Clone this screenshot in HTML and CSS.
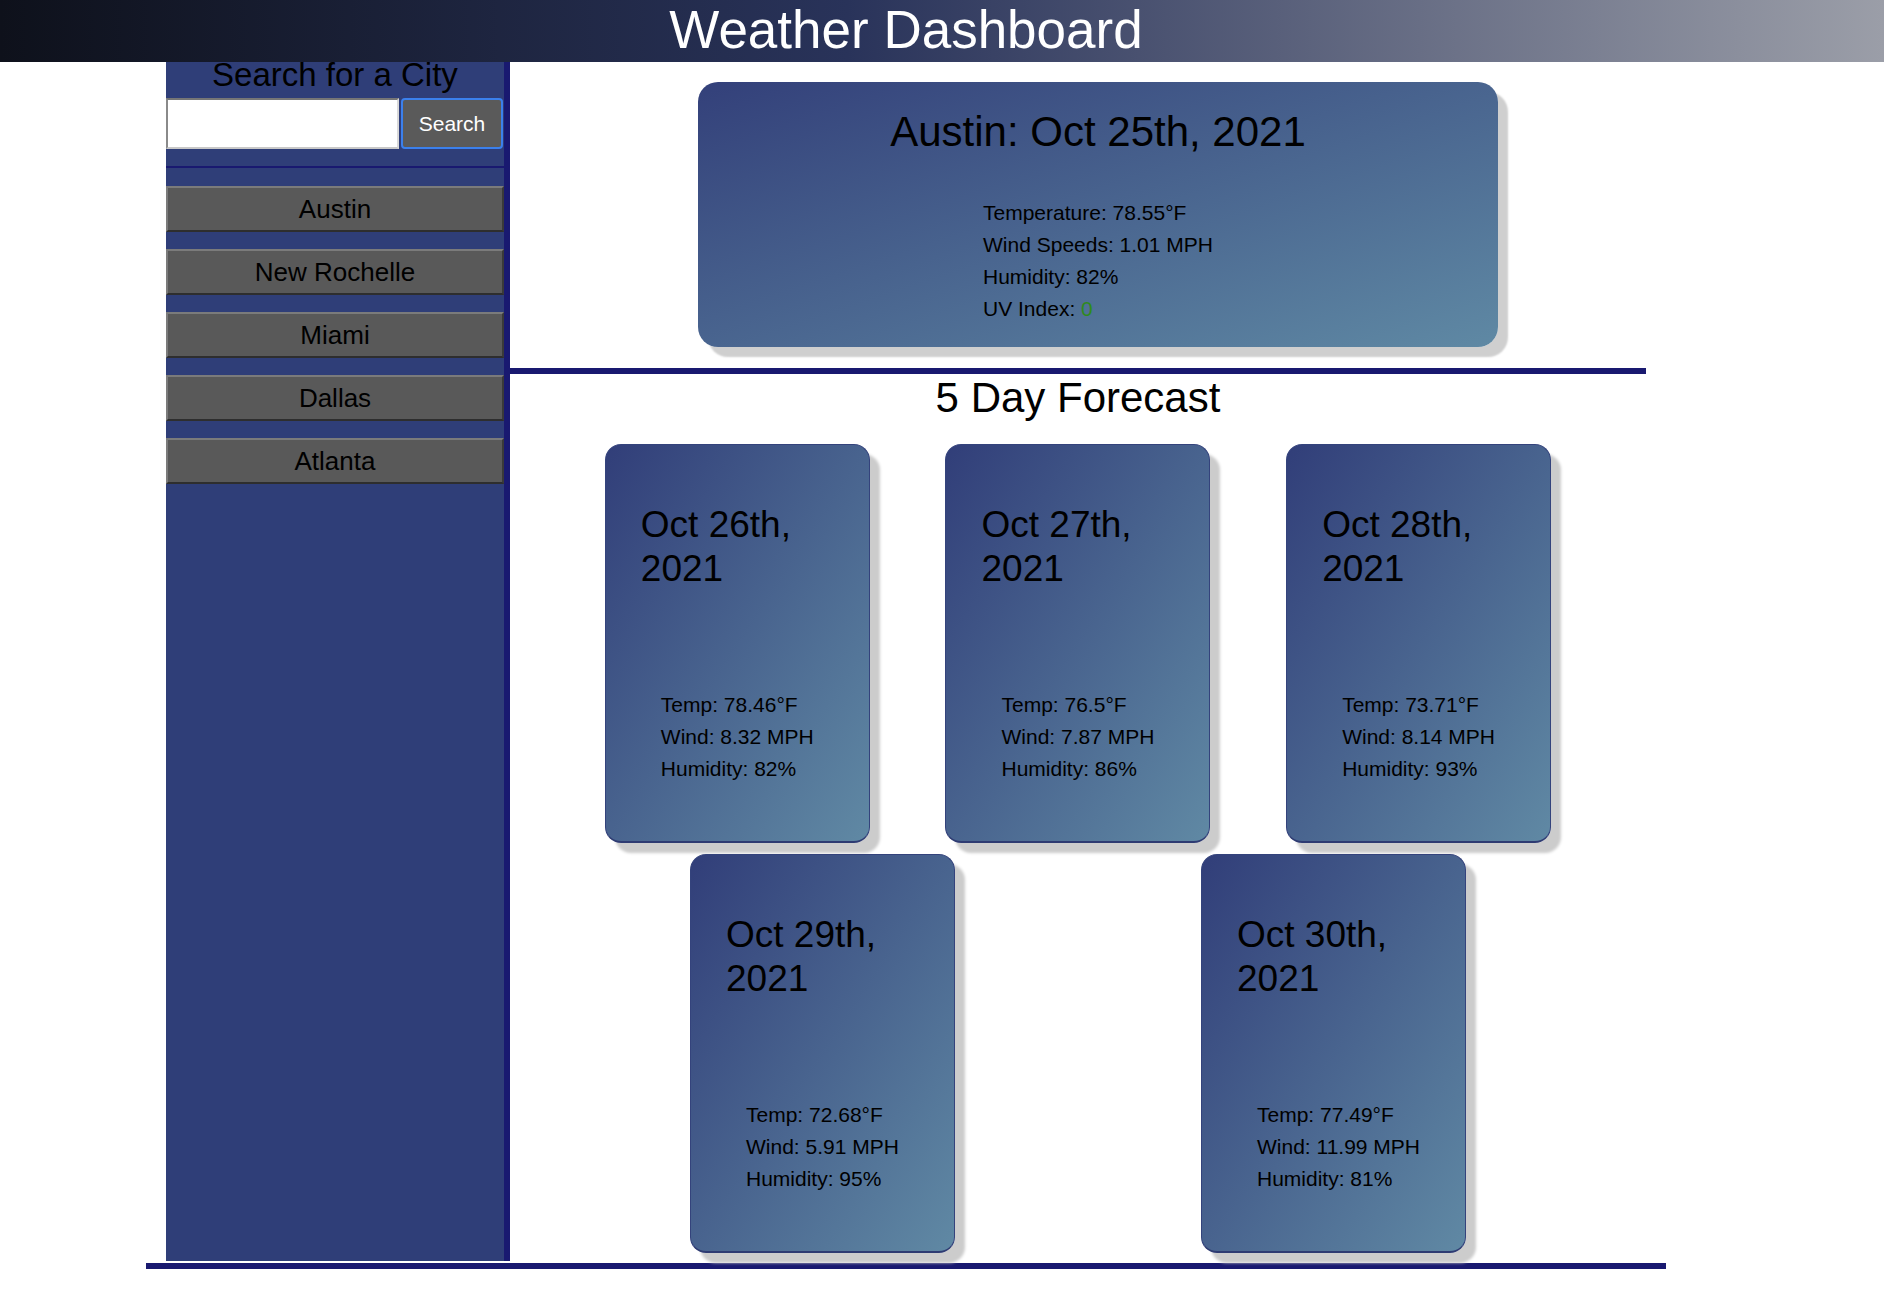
FILE: index.html
```html
<!DOCTYPE html>
<html lang="en">
<head>
<meta charset="utf-8">
<title>Weather Dashboard</title>
<link rel="stylesheet" href="styles.css">
</head>
<body>
<header class="topbar">
  <h1 class="topbar-title">Weather Dashboard</h1>
</header>
<div class="layout">
  <aside class="sidebar">
    <form class="search">
      <h2 class="search-title">Search for a City</h2>
      <div class="search-row">
        <input class="search-input" type="text">
        <button class="search-btn" type="button">Search</button>
      </div>
    </form>
    <div class="history">
      <button class="city-btn" type="button">Austin</button>
      <button class="city-btn" type="button">New Rochelle</button>
      <button class="city-btn" type="button">Miami</button>
      <button class="city-btn" type="button">Dallas</button>
      <button class="city-btn" type="button">Atlanta</button>
    </div>
  </aside>
  <main class="content">
    <section class="today">
      <h2 class="today-title">Austin: Oct 25th, 2021</h2>
      <div class="today-details">
        <ul class="detail-list">
          <li>Temperature: 78.55°F</li>
          <li>Wind Speeds: 1.01 MPH</li>
          <li>Humidity: 82%</li>
          <li>UV Index: <span class="uv-low">0</span></li>
        </ul>
      </div>
    </section>
    <section class="forecast">
      <h2 class="forecast-title">5 Day Forecast</h2>
      <div class="forecast-cards">
        <div class="day-card">
          <h3 class="day-title">Oct 26th, 2021</h3>
          <ul class="day-list">
            <li>Temp: 78.46°F</li>
            <li>Wind: 8.32 MPH</li>
            <li>Humidity: 82%</li>
          </ul>
        </div>
        <div class="day-card">
          <h3 class="day-title">Oct 27th, 2021</h3>
          <ul class="day-list">
            <li>Temp: 76.5°F</li>
            <li>Wind: 7.87 MPH</li>
            <li>Humidity: 86%</li>
          </ul>
        </div>
        <div class="day-card">
          <h3 class="day-title">Oct 28th, 2021</h3>
          <ul class="day-list">
            <li>Temp: 73.71°F</li>
            <li>Wind: 8.14 MPH</li>
            <li>Humidity: 93%</li>
          </ul>
        </div>
        <div class="day-card">
          <h3 class="day-title">Oct 29th, 2021</h3>
          <ul class="day-list">
            <li>Temp: 72.68°F</li>
            <li>Wind: 5.91 MPH</li>
            <li>Humidity: 95%</li>
          </ul>
        </div>
        <div class="day-card">
          <h3 class="day-title">Oct 30th, 2021</h3>
          <ul class="day-list">
            <li>Temp: 77.49°F</li>
            <li>Wind: 11.99 MPH</li>
            <li>Humidity: 81%</li>
          </ul>
        </div>
      </div>
    </section>
  </main>
</div>
</body>
</html>
```

FILE: styles.css
```css
* {
  box-sizing: border-box;
}

body {
  margin: 0;
  background: #ffffff;
  color: #000000;
  font-family: "Liberation Sans", Arial, Helvetica, sans-serif;
}

.topbar {
  height: 62px;
  padding-right: 72px;
  background: linear-gradient(90deg, #0e111b 0%, #29335a 45%, #9b9ea8 100%);
}

.topbar-title {
  margin: 0;
  font-size: 53px;
  font-weight: normal;
  line-height: 60px;
  text-align: center;
  color: #ffffff;
}

.layout {
  display: flex;
  align-items: stretch;
  width: 1520px;
  margin-left: 146px;
  padding: 0 20px;
  border-bottom: 6px solid #191970;
}

/* Sidebar */
.sidebar {
  flex: 0 0 344px;
  width: 344px;
  margin-bottom: 2px;
  background: #2f3e78;
  border-right: 6px solid #191970;
}

.search {
  margin: 0;
  padding-bottom: 17px;
  border-bottom: 2px solid #191970;
}

.search-title {
  margin: 0;
  height: 36px;
  font-size: 33px;
  font-weight: normal;
  line-height: 25px;
  text-align: center;
  color: #000000;
}

.search-row {
  display: flex;
  gap: 2px;
}

.search-input {
  width: 233px;
  height: 51px;
  margin: 0;
  background: #ffffff;
  border-style: solid;
  border-width: 2px;
  border-color: #767676 #d9d9d9 #c8c8c8 #8a8a8a;
  font-family: inherit;
  font-size: 21px;
}

.search-btn {
  width: 102px;
  height: 51px;
  margin: 0;
  padding: 0;
  background: #5a5a5a;
  border: 2px solid #3b80ec;
  border-radius: 4px;
  color: #ffffff;
  font-family: inherit;
  font-size: 21px;
}

.history {
  display: flex;
  flex-direction: column;
  gap: 17px;
  padding-top: 18px;
}

.city-btn {
  display: block;
  width: 100%;
  height: 46px;
  margin: 0;
  padding: 0;
  background: #595959;
  border-style: solid;
  border-width: 2px;
  border-color: #7b7b7b #3a3a3a #2e2e2e #7b7b7b;
  color: #000000;
  font-family: inherit;
  font-size: 26px;
}

/* Main content */
.content {
  flex: 1 1 auto;
  min-width: 0;
}

.today {
  width: 800px;
  height: 265px;
  margin: 20px 0 21px 188px;
  padding-top: 26px;
  border-radius: 20px;
  background: linear-gradient(to bottom right, #33407a, #5f89a4);
  box-shadow: 10px 10px 2px #cfcfcf;
}

.today-title {
  margin: 0;
  font-size: 42px;
  font-weight: normal;
  line-height: 48px;
  text-align: center;
}

.today-details {
  display: flex;
  justify-content: center;
  margin-top: 41px;
}

.detail-list,
.day-list {
  margin: 0;
  padding: 0;
  list-style: none;
  font-size: 21px;
  line-height: 32px;
}

.uv-low {
  color: #2f8a1c;
}

.forecast {
  border-top: 6px solid #191970;
  padding-bottom: 10px;
}

.forecast-title {
  margin: 0;
  font-size: 42px;
  font-weight: normal;
  line-height: 48px;
  text-align: center;
}

.forecast-cards {
  display: flex;
  flex-wrap: wrap;
  justify-content: space-around;
  row-gap: 11px;
  width: 1022px;
  margin: 22px auto 0;
}

.day-card {
  width: 265px;
  height: 399px;
  padding: 58px 35px 0 35px;
  border: 1px solid #34437c;
  border-bottom: 2px solid #2e3b72;
  border-radius: 16px;
  background: linear-gradient(to bottom right, #313e79, #6089a4);
  box-shadow: 10px 10px 3px #cccccc;
}

.day-title {
  margin: 0;
  font-size: 37px;
  font-weight: normal;
  line-height: 44px;
}

.day-list {
  margin-top: 98px;
  margin-left: 20px;
}
```
